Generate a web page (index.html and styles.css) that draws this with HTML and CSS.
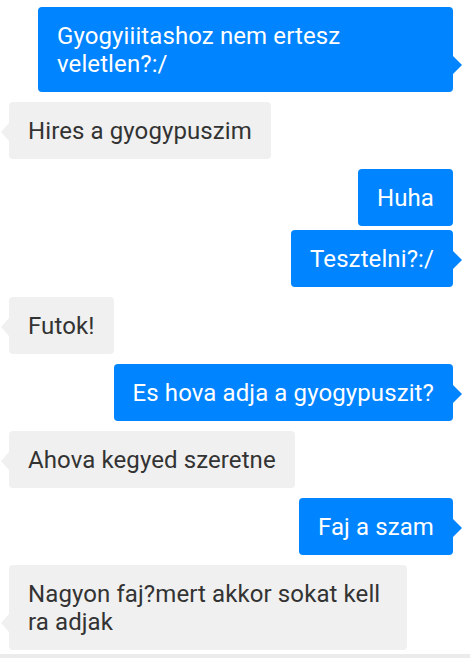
FILE: index.html
```html
<!DOCTYPE html>
<html>
<head>
<meta charset="utf-8">
<link rel="stylesheet" href="styles.css">
</head>
<body>
<div class="chat">
  <div class="row out"><div class="bubble out tail">Gyogyiiitashoz nem ertesz veletlen?:/</div></div>
  <div class="row in"><div class="bubble in tail">Hires a gyogypuszim</div></div>
  <div class="row out"><div class="bubble out">Huha</div></div>
  <div class="row out grouped"><div class="bubble out tail">Tesztelni?:/</div></div>
  <div class="row in"><div class="bubble in tail">Futok!</div></div>
  <div class="row out"><div class="bubble out tail">Es hova adja a gyogypuszit?</div></div>
  <div class="row in"><div class="bubble in tail">Ahova kegyed szeretne</div></div>
  <div class="row out"><div class="bubble out tail">Faj a szam</div></div>
  <div class="row in"><div class="bubble in tail">Nagyon faj?mert akkor sokat kell ra adjak</div></div>
</div>
<div class="footer"></div>
</body>
</html>
```
FILE: styles.css
```css
html, body {
  margin: 0;
  padding: 0;
  background: #ffffff;
  height: 100%;
  overflow: hidden;
}
body {
  font-family: Roboto, "Noto Sans", sans-serif;
  font-size: 24px;
  letter-spacing: 0.1px;
  line-height: 28px;
  display: flex;
  flex-direction: column;
}
.chat {
  flex: 1;
  padding: 7px 17px 0 9px;
  display: flex;
  flex-direction: column;
  gap: 10px;
}
.row {
  display: flex;
}
.row.out { justify-content: flex-end; }
.row.in { justify-content: flex-start; }
.row.grouped { margin-top: -6px; }
.bubble {
  position: relative;
  box-sizing: border-box;
  padding: 15px 19px 14px 19px;
  border-radius: 4px;
}
.bubble.out {
  background: #0084ff;
  color: #ffffff;
  max-width: 415px;
}
.bubble.in {
  background: #f0f0f0;
  color: #333333;
  max-width: 398px;
}
.bubble.tail::after {
  content: "";
  position: absolute;
  bottom: 18px;
  border-top: 9px solid transparent;
  border-bottom: 9px solid transparent;
}
.bubble.out.tail::after {
  right: -9px;
  border-left: 9px solid #0084ff;
}
.bubble.in.tail::after {
  left: -8px;
  border-right: 8px solid #f0f0f0;
}
.footer {
  height: 4px;
  background: #ebebeb;
}
```
